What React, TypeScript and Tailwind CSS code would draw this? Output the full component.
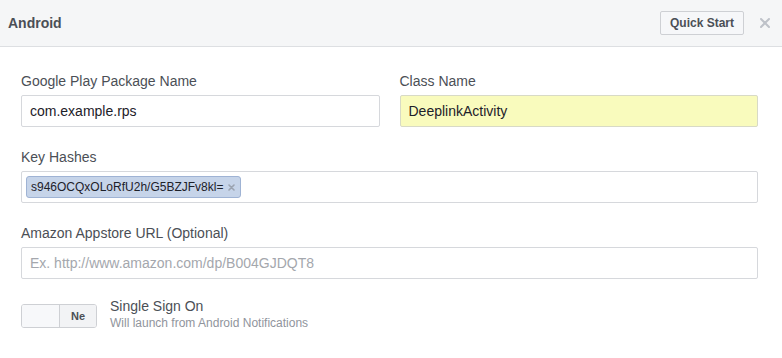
import React from 'react';

const font = { fontFamily: '"Liberation Sans", Arial, sans-serif' };

const Field: React.FC<{ label: string; children: React.ReactNode }> = ({ label, children }) => (
  <div className="flex flex-col">
    <label className="text-[14px] leading-[18px] text-[#4b4f56] mb-[5px]">{label}</label>
    {children}
  </div>
);

export default function App() {
  return (
    <div className="w-[782px] h-[358px] bg-white overflow-hidden" style={font}>
      <div className="h-[47px] flex items-center justify-between pl-[8px] pr-[12px] bg-[#f5f6f7] border-b border-[#dddfe2]">
        <span className="text-[14px] font-bold text-[#4b4f56]">Android</span>
        <div className="flex items-center gap-[16px]">
          <button className="h-[24px] px-[9px] text-[12px] font-bold text-[#4b4f56] bg-[#f6f7f9] border border-[#ced0d4] rounded-[2px]">
            Quick Start
          </button>
          <svg width="10" height="10" viewBox="0 0 10 10">
            <path d="M1 1L9 9M9 1L1 9" stroke="#bec2c9" strokeWidth="2" strokeLinecap="round" />
          </svg>
        </div>
      </div>

      <div className="pl-[21px] pr-[24px] pt-[25px] flex flex-col gap-[21px]">
        <div className="grid grid-cols-2 gap-x-[20px]">
          <Field label="Google Play Package Name">
            <div className="h-[32px] border border-[#d6d8dc] rounded-[2px] px-[8px] flex items-center text-[14px] text-[#1d2129]">
              com.example.rps
            </div>
          </Field>
          <Field label="Class Name">
            <div className="h-[32px] border border-[#d8dac6] bg-[#f9fbbd] rounded-[2px] px-[8px] flex items-center text-[14px] text-[#1d2129]">
              DeeplinkActivity
            </div>
          </Field>
        </div>

        <Field label="Key Hashes">
          <div className="h-[32px] border border-[#d6d8dc] rounded-[2px] px-[4px] flex items-center">
            <span className="h-[22px] flex items-center gap-[5px] pl-[4px] pr-[5px] bg-[#c6d4e9] border border-[#9fb3d4] rounded-[3px] text-[12px] text-[#1d2129]">
              s946OCQxOLoRfU2h/G5BZJFv8kl=
              <svg width="7" height="7" viewBox="0 0 7 7">
                <path d="M1 1L6 6M6 1L1 6" stroke="#9ba3b0" strokeWidth="1.6" strokeLinecap="round" />
              </svg>
            </span>
          </div>
        </Field>

        <Field label="Amazon Appstore URL (Optional)">
          <div className="h-[32px] border border-[#d6d8dc] rounded-[2px] px-[8px] flex items-center text-[14px] text-[#a4a7ad]">
            Ex. http://www.amazon.com/dp/B004GJDQT8
          </div>
        </Field>

        <div className="flex items-start gap-[13px] mt-[-3px]">
          <div className="mt-[7px] w-[76px] h-[24px] flex border border-[#ced0d4] rounded-[3px] overflow-hidden">
            <div className="w-[38px] bg-[#f7f8fa] border-r border-[#ced0d4]" />
            <div className="flex-1 bg-[#f2f3f5] flex items-center justify-center text-[11px] font-bold text-[#4b4f56]">
              Ne
            </div>
          </div>
          <div className="flex flex-col">
            <span className="text-[14px] leading-[18px] text-[#4b4f56]">Single Sign On</span>
            <span className="text-[12px] leading-[16px] text-[#90949c]">Will launch from Android Notifications</span>
          </div>
        </div>
      </div>
    </div>
  );
}
